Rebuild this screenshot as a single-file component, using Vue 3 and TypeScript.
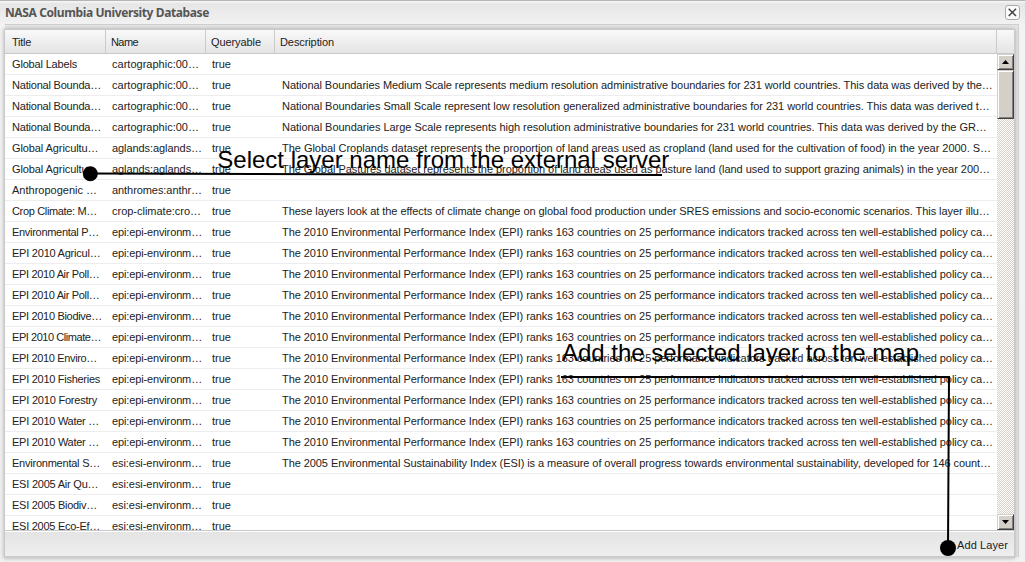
<script setup lang="ts">
interface Row { title: string; titleW: number; name: string; nameW: number; desc: string; descW: number }

const epi = 'The 2010 Environmental Performance Index (EPI) ranks 163 countries on 25 performance indicators tracked across ten well-established policy ca…'
const row = (title: string, titleW: number, name: string, nameW: number, desc = '', descW = 0): Row => ({ title, titleW, name, nameW, desc, descW })
const epiRow = (title: string, w: number) => row(title, w, 'epi:epi-environm…', 90, epi, 711)
const rows: Row[] = [
  row('Global Labels', 65, 'cartographic:00…', 87),
  row('National Bounda…', 89, 'cartographic:00…', 87, 'National Boundaries Medium Scale represents medium resolution administrative boundaries for 231 world countries. This data was derived by the…', 711),
  row('National Bounda…', 89, 'cartographic:00…', 87, 'National Boundaries Small Scale represent low resolution generalized administrative boundaries for 231 world countries. This data was derived t…', 708),
  row('National Bounda…', 89, 'cartographic:00…', 87, 'National Boundaries Large Scale represents high resolution administrative boundaries for 231 world countries. This data was derived by the GR…', 705),
  row('Global Agricultu…', 87, 'aglands:aglands…', 90, 'The Global Croplands dataset represents the proportion of land areas used as cropland (land used for the cultivation of food) in the year 2000. S…', 709),
  row('Global Agricultu…', 87, 'aglands:aglands…', 90, 'The Global Pastures dataset represents the proportion of land areas used as pasture land (land used to support grazing animals) in the year 200…', 708),
  row('Anthropogenic …', 85, 'anthromes:anthr…', 90),
  row('Crop Climate: M…', 85, 'crop-climate:cro…', 89, 'These layers look at the effects of climate change on global food production under SRES emissions and socio-economic scenarios. This layer illu…', 708),
  epiRow('Environmental P…', 87),
  epiRow('EPI 2010 Agricul…', 89),
  epiRow('EPI 2010 Air Poll…', 88),
  epiRow('EPI 2010 Air Poll…', 88),
  epiRow('EPI 2010 Biodive…', 90),
  epiRow('EPI 2010 Climate…', 89),
  epiRow('EPI 2010 Enviro…', 85),
  epiRow('EPI 2010 Fisheries', 88),
  epiRow('EPI 2010 Forestry', 85),
  epiRow('EPI 2010 Water …', 87),
  epiRow('EPI 2010 Water …', 87),
  row('Environmental S…', 88, 'esi:esi-environm…', 90, 'The 2005 Environmental Sustainability Index (ESI) is a measure of overall progress towards environmental sustainability, developed for 146 count…', 709),
  row('ESI 2005 Air Qu…', 87, 'esi:esi-environm…', 90),
  row('ESI 2005 Biodiv…', 85, 'esi:esi-environm…', 90),
  row('ESI 2005 Eco-Ef…', 88, 'esi:esi-environm…', 90),
]

const ctx = document.createElement('canvas').getContext('2d')!
// Spreads the letters so that a run of text fills the given width.
function fit(text: string, width: number, font = '11px "Liberation Sans"') {
  if (!text) return {}
  ctx.font = font
  return { letterSpacing: ((width - ctx.measureText(text).width) / text.length).toFixed(4) + 'px' }
}
</script>

<template>
  <div class="window">
    <header class="titlebar">
      <span class="heading" :style="fit('NASA Columbia University Database', 204, 'bold 12px &quot;Noto Sans&quot;')">NASA Columbia University Database</span>
      <svg class="close" width="15" height="15" viewBox="0 0 15 15">
        <rect x=".5" y=".5" width="14" height="14" rx="2.5" fill="#fbfbfb" stroke="#aaa" />
        <path d="M3.7 3.7l7.3 7.3M11 3.7l-7.3 7.3" stroke="#444" stroke-width="1.5" />
      </svg>
    </header>
    <div class="frame">
      <div class="panel">
        <div class="grid head">
          <span :style="fit('Title', 19)">Title</span>
          <span :style="fit('Name', 27)">Name</span>
          <span :style="fit('Queryable', 50)">Queryable</span>
          <span :style="fit('Description', 54)">Description</span>
          <span></span>
        </div>
        <div class="body">
          <div class="rows">
            <div v-for="(r, i) in rows" :key="i" class="grid row">
              <span :style="fit(r.title, r.titleW)">{{ r.title }}</span>
              <span :style="fit(r.name, r.nameW)">{{ r.name }}</span>
              <span :style="fit('true', 19)">true</span>
              <span :style="fit(r.desc, r.descW)">{{ r.desc }}</span>
            </div>
          </div>
          <div class="scroll">
            <div class="btn"><svg width="7" height="4"><path d="M0 4L3.5 0L7 4z" /></svg></div>
            <div class="btn thumb"></div>
            <div class="track"></div>
            <div class="btn"><svg width="7" height="4"><path d="M0 0L3.5 4L7 0z" /></svg></div>
          </div>
        </div>
        <footer class="foot"><span :style="fit('Add Layer', 51)">Add Layer</span></footer>
      </div>
    </div>
    <svg class="notes" width="1025" height="562" viewBox="0 0 1025 562">
      <path d="M90 173.6L662 175" stroke="#000" stroke-width="2" />
      <circle cx="90.3" cy="173.8" r="7.5" />
      <path d="M561 377H949L948 548" fill="none" stroke="#000" stroke-width="2" />
      <circle cx="948" cy="548" r="8" />
      <text x="217.3" y="168" textLength="452">Select layer name from the external server</text>
      <text x="562" y="361" textLength="357">Add the selected layer to the map</text>
    </svg>
  </div>
</template>

<style>
body { margin: 0; overflow: hidden; background: #f0f0f0; }
</style>

<style scoped>
.window { position: relative; box-sizing: border-box; width: 1025px; height: 562px; overflow: hidden; display: flex; flex-direction: column; padding-left: 4px; border-top: 1px solid #b5b5b5; background: linear-gradient(#f8f8f8, #e6e6e6 3px, #f3f3f3 25px, #f1f1f1); font: 11px/13px "Liberation Sans", Arial, sans-serif; color: #222; }
.titlebar { height: 23px; flex: none; display: flex; justify-content: space-between; padding: 0 5px 0 1px; }
.heading { font: bold 12px/24px "Noto Sans", Tahoma, sans-serif; color: #555; white-space: nowrap; }
.close { margin-top: 4px; }
.frame { box-sizing: border-box; width: 1014px; height: 533px; margin-left: 1px; border: 1px solid #d0d0d0; border-left: 0; border-bottom: 0; padding-top: 4px; background: #e5e5e5; }
.panel { box-sizing: border-box; width: 1011px; height: 529px; margin-left: -1px; border: 1px solid #c9c9c9; border-bottom: 2px solid #ccc; background: #fff; box-shadow: 0 0 4px #aaa; display: flex; flex-direction: column; }
.grid { display: grid; grid-template-columns: 100px 100px 70px 722px 1fr; white-space: pre; }
.head { grid-template-columns: 101px 100px 69px 722px 1fr; height: 23px; flex: none; border-bottom: 1px solid #c8c8c8; background: linear-gradient(#f9f9f9, #e4e4e4); }
.head span { padding: 6px 0 0 5px; border-right: 1px solid #cbcbcb; }
.head span:first-child { padding-left: 7px; }
.head span:last-child { border: 0; }
.body { height: 476px; flex: none; display: flex; overflow: hidden; border-bottom: 1px solid #c8c8c8; }
.rows { width: 992px; }
.row { height: 20px; border-bottom: 1px solid #ededed; }
.row span { padding: 4px 0 0 7px; }
.scroll { width: 17px; height: 476px; display: flex; flex-direction: column; }
.btn { box-sizing: border-box; height: 16px; flex: none; background: #d4d0c8; border: 1px solid; border-color: #d4d0c8 #404040 #404040 #d4d0c8; box-shadow: inset 1px 1px #fff, inset -1px -1px #808080; display: flex; align-items: center; justify-content: center; }
.thumb { height: 49px; }
.track { flex: 1; background: repeating-conic-gradient(#d4d0c8 0 25%, #fff 0 50%) 0 0 / 2px 2px; }
.foot { flex: 1; margin-top: 1px; background: linear-gradient(#e4e4e4, #eee); padding: 7px 6px 0 0; text-align: right; }
.notes { position: absolute; left: 0; top: -1px; }
.notes text { font: 24px "Liberation Sans", Arial, sans-serif; fill: #000; }
</style>
